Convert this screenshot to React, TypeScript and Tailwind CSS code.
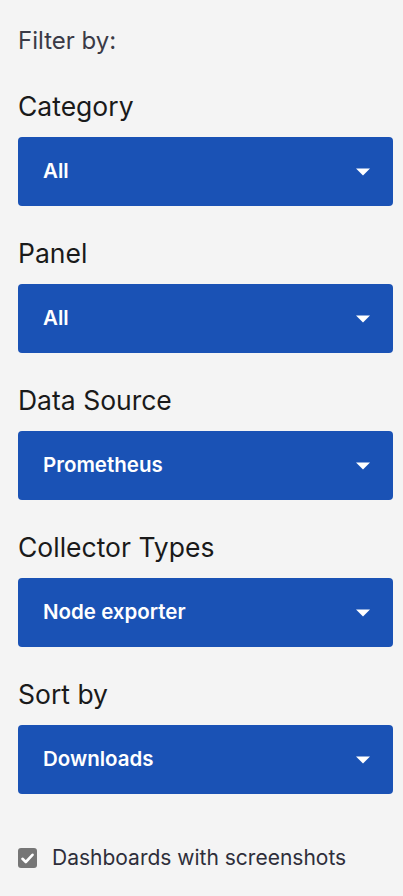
import { useState } from 'react';

type Filter = {
  label: string;
  value: string;
  options: string[];
};

const FILTERS: Filter[] = [
  { label: 'Category', value: 'All', options: ['All'] },
  { label: 'Panel', value: 'All', options: ['All'] },
  { label: 'Data Source', value: 'Prometheus', options: ['Prometheus'] },
  { label: 'Collector Types', value: 'Node exporter', options: ['Node exporter'] },
  { label: 'Sort by', value: 'Downloads', options: ['Downloads'] },
];

// 드롭다운 오른쪽 삼각형
function Caret() {
  return (
    <svg width="14" height="8" viewBox="0 0 14 8" className="shrink-0">
      <path d="M0 0.5H14L7 7.5Z" fill="#ffffff" />
    </svg>
  );
}

function FilterSelect({ filter, first }: { filter: Filter; first: boolean }) {
  return (
    <div className={first ? 'mt-[33px]' : 'mt-[31px]'}>
      <h3 className="text-[26.5px] leading-[32px] font-normal text-[#1a1a1a]">{filter.label}</h3>
      <button className="mt-[15px] w-full h-[69px] rounded-[4px] bg-[#1a52b5] flex items-center justify-between pl-[25px] pr-[23px]">
        <span className="text-[20.5px] font-semibold text-white">{filter.value}</span>
        <Caret />
      </button>
    </div>
  );
}

export default function App() {
  const [withScreenshots, setWithScreenshots] = useState(true);

  return (
    <div
      className="min-h-screen bg-[#f4f4f4] pl-[18px] pr-[10px] pt-[25px]"
      style={{ fontFamily: 'Inter, "Noto Sans", sans-serif' }}
    >
      <p className="text-[24px] leading-[32px] text-[#3a3a46]">Filter by:</p>

      {FILTERS.map((f, i) => (
        <FilterSelect key={f.label} filter={f} first={i === 0} />
      ))}

      {/* 스크린샷 체크박스 */}
      <label className="mt-[50px] flex items-center gap-[15px] cursor-pointer">
        <span
          onClick={() => setWithScreenshots(!withScreenshots)}
          className="w-[19px] h-[20px] rounded-[3px] bg-[#767676] flex items-center justify-center"
        >
          {withScreenshots && (
            <svg width="13" height="11" viewBox="0 0 13 11">
              <path d="M1.5 5.8L4.8 9L11.5 1.8" stroke="#fff" strokeWidth="2.6" fill="none" strokeLinecap="round" strokeLinejoin="round" />
            </svg>
          )}
        </span>
        <span className="text-[21px] leading-[28px] text-[#2e2e3a]">Dashboards with screenshots</span>
      </label>
    </div>
  );
}
